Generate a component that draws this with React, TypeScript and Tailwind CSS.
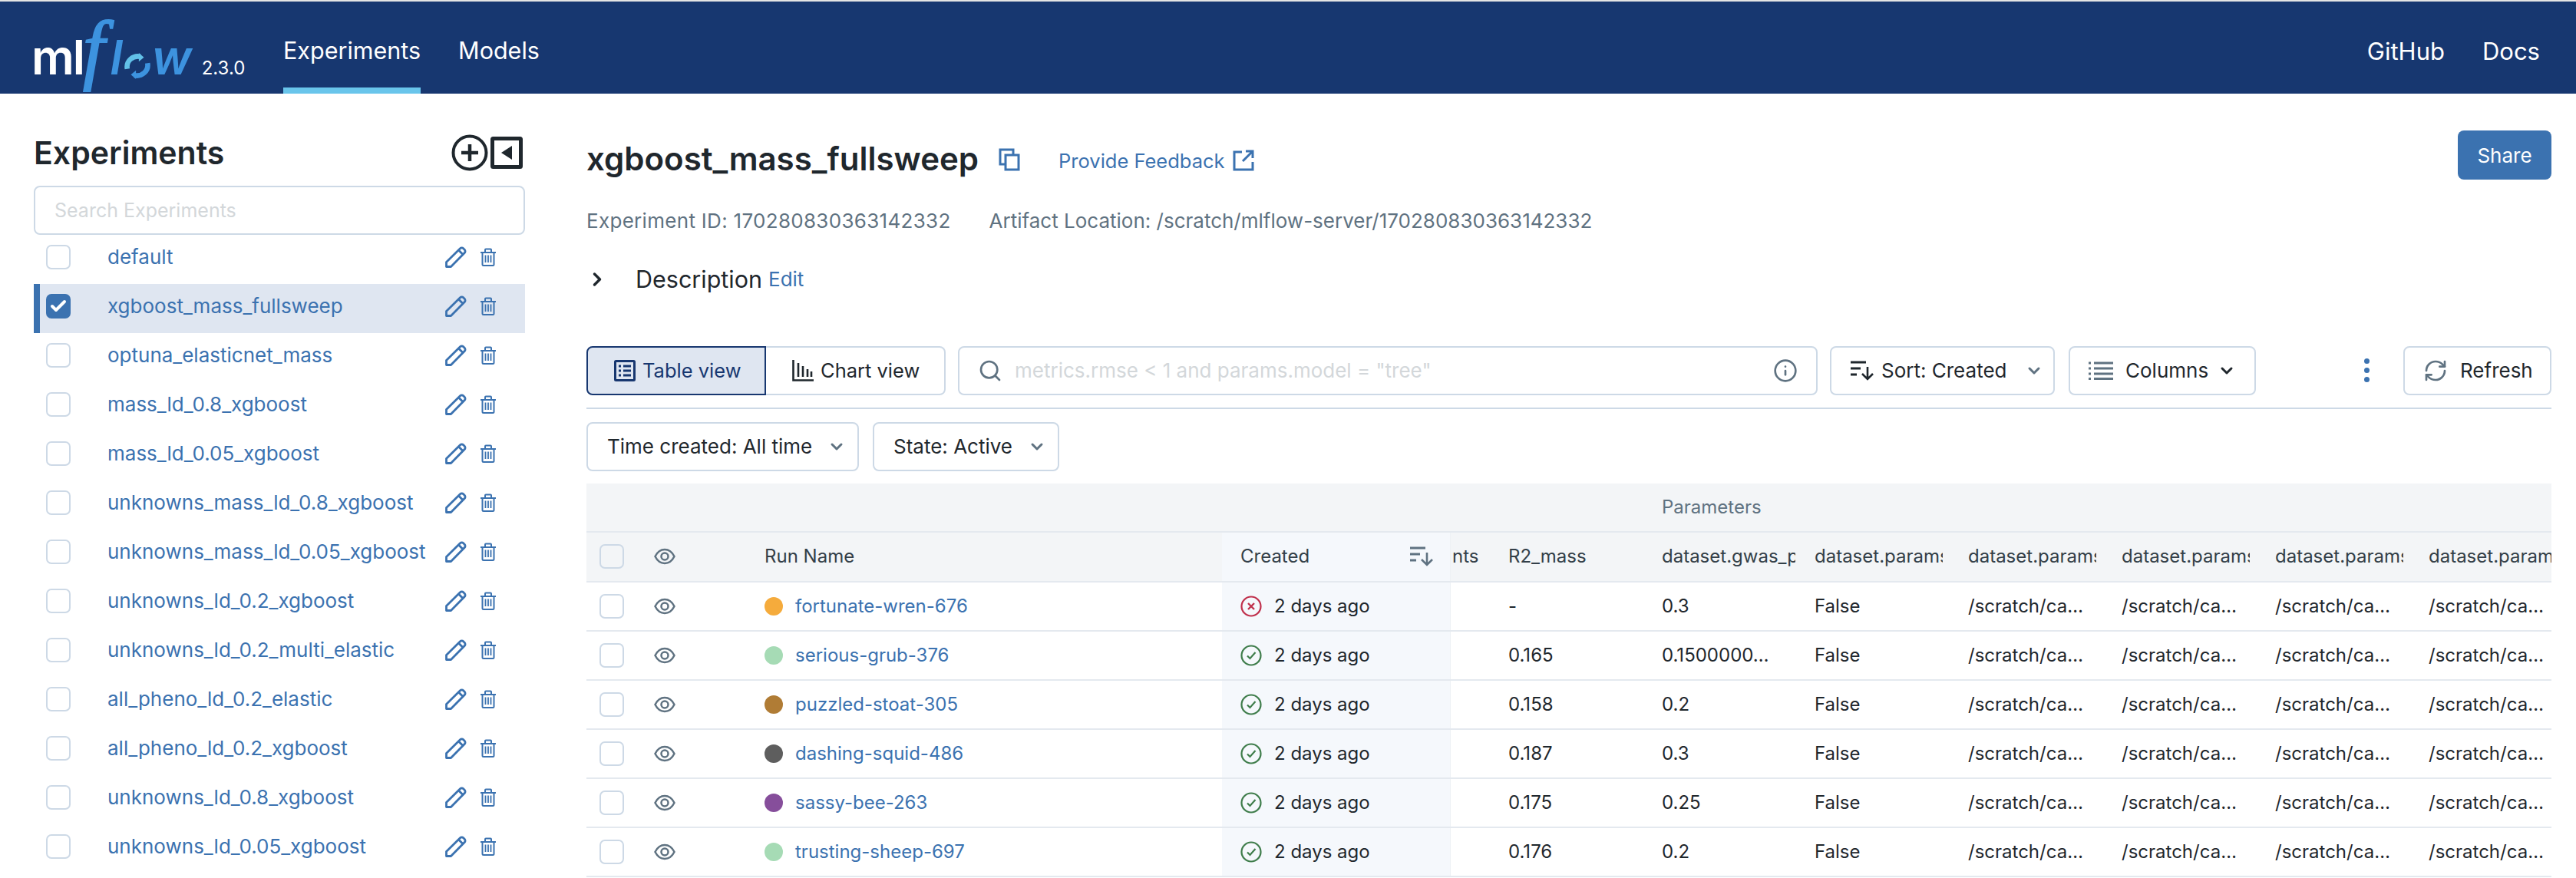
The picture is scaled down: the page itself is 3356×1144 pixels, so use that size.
import { ChevronDown, ChevronRight, Info, RefreshCw, Search, Check } from "lucide-react";

const FONT = "font-['Inter','Noto_Sans',sans-serif]";

const experiments = [
  "default",
  "xgboost_mass_fullsweep",
  "optuna_elasticnet_mass",
  "mass_ld_0.8_xgboost",
  "mass_ld_0.05_xgboost",
  "unknowns_mass_ld_0.8_xgboost",
  "unknowns_mass_ld_0.05_xgboost",
  "unknowns_ld_0.2_xgboost",
  "unknowns_ld_0.2_multi_elastic",
  "all_pheno_ld_0.2_elastic",
  "all_pheno_ld_0.2_xgboost",
  "unknowns_ld_0.8_xgboost",
  "unknowns_ld_0.05_xgboost",
];

const runs = [
  { name: "fortunate-wren-676", dot: "bg-[#f5ab3c]", failed: true, r2: "-", gwas: "0.3" },
  { name: "serious-grub-376", dot: "bg-[#a6dbb5]", failed: false, r2: "0.165", gwas: "0.1500000…" },
  { name: "puzzled-stoat-305", dot: "bg-[#b07c35]", failed: false, r2: "0.158", gwas: "0.2" },
  { name: "dashing-squid-486", dot: "bg-[#5e5e5e]", failed: false, r2: "0.187", gwas: "0.3" },
  { name: "sassy-bee-263", dot: "bg-[#864e9b]", failed: false, r2: "0.175", gwas: "0.25" },
  { name: "trusting-sheep-697", dot: "bg-[#a6dbb5]", failed: false, r2: "0.176", gwas: "0.2" },
];

const GRID =
  "grid grid-cols-[88px_144px_596px_298px_75px_200px_199px_200px_200px_200px_200px_160px]";

function PencilIcon() {
  return (
    <svg width="28" height="28" viewBox="0 0 28 28" fill="none" stroke="#3b72b0" strokeWidth="2.800" strokeLinejoin="round">
      <path d="M1.500 26.500v-6L19.500 2.800a3 3 0 0 1 4.200 0l1.500 1.500a3 3 0 0 1 0 4.200L7.500 26.500z" />
      <path d="M17.500 5l5.500 5.500" />
    </svg>
  );
}

function TrashIcon() {
  return (
    <svg width="20" height="24" viewBox="0 0 20 24" fill="none" stroke="#3b72b0" strokeWidth="2">
      <path d="M0 6h20M6 6V2.500Q6 1.500 7 1.500h6q1 0 1 1V6M2.500 6v15.500q0 1.500 1.500 1.500h12q1.500 0 1.500-1.500V6" />
      <path d="M6.500 9.500v9.500M10 9.500v9.500M13.500 9.500v9.500" strokeWidth="1.800" />
    </svg>
  );
}

function EyeIcon() {
  return (
    <svg width="28" height="22" viewBox="0 0 28 22" fill="none" stroke="#5f7281" strokeWidth="2.500">
      <path d="M1.500 11C4.500 5 8.800 2 14 2s9.500 3 12.500 9c-3 6-7.300 9-12.500 9S4.500 17 1.500 11z" />
      <circle cx="14" cy="11" r="4.500" />
    </svg>
  );
}

function SortIcon({ color }: { color: string }) {
  return (
    <svg width="30" height="26" viewBox="0 0 30 26" fill="none" stroke={color} strokeWidth="3">
      <path d="M0 2h20M0 10h13M0 18h8" />
      <path d="M22 8v16M15 17l7 7 7-7" strokeWidth="2.600" />
    </svg>
  );
}

function StatusIcon({ failed }: { failed: boolean }) {
  const color = failed ? "#c0304c" : "#3f7d4b";
  return (
    <svg width="28" height="28" viewBox="0 0 28 28" fill="none" stroke={color} strokeWidth="2.200">
      <circle cx="14" cy="14" r="12.500" />
      {failed ? <path d="M10 10l8 8M18 10l-8 8" strokeWidth="2.400" /> : <path d="M9 14.500l3.500 3.500L19.500 10" />}
    </svg>
  );
}

function Logo() {
  return (
    <div className="ml-[-3px] flex w-[279px] items-baseline pt-[2px] text-[62px] leading-[80px]">
      <span className="font-semibold tracking-[-2px] text-white">ml</span>
      <span className="ml-[-1px] flex items-baseline font-semibold text-[#3d93df] italic">
        <span className="font-['Liberation_Serif'] text-[102px] leading-none font-normal [-webkit-text-stroke:2px_#3d93df]">f</span>
        <span className="ml-[7px]">l</span>
        <svg width="34" height="34" viewBox="0 0 36 36" fill="none" strokeWidth="7" className="mb-[12px] ml-[2px] self-end">
          <path d="M4 22C2 11 12 3 22 5" stroke="#62c1e8" />
          <path d="M32 14c2 11-8 19-18 17" stroke="#3d93df" />
          <path d="M20 0l7 6-7 6z" fill="#62c1e8" />
          <path d="M16 36l-7-6 7-6z" fill="#3d93df" />
        </svg>
        <span className="ml-[2px]">w</span>
      </span>
      <span className="ml-[13px] text-[24px] leading-none font-normal text-white">2.3.0</span>
    </div>
  );
}

function Header() {
  return (
    <header className="flex h-[120px] items-stretch justify-between bg-[#173770] pr-[47px] pl-[44px] text-white">
      <div className="flex items-stretch">
        <div className="mr-[49px] flex items-center">
          <Logo />
        </div>
        <a className="flex items-center border-b-[8px] border-[#69c5eb] pt-[16px] text-[30.500px]">Experiments</a>
        <a className="ml-[49px] flex items-center pt-[8px] text-[30.500px]">Models</a>
      </div>
      <div className="flex items-center gap-[49px] pt-[10px] text-[31px]">
        <a>GitHub</a>
        <a>Docs</a>
      </div>
    </header>
  );
}

function Sidebar() {
  return (
    <aside className="w-[720px] shrink-0 pr-[36px] pl-[44px]">
      <div className="mt-[52px] flex h-[50px] items-center justify-between pr-[3px]">
        <h1 className="pt-[2px] text-[41px] font-semibold text-[#1f272d]">Experiments</h1>
        <div className="flex items-center gap-[3px]">
          <svg width="48" height="48" viewBox="0 0 48 48" fill="none" stroke="#1f272d" strokeWidth="4">
            <circle cx="24" cy="24" r="21.500" />
            <path d="M24 13v22M13 24h22" strokeWidth="4.500" />
          </svg>
          <svg width="42" height="42" viewBox="0 0 42 42" fill="none">
            <rect x="2.500" y="2.500" width="37" height="37" rx="1" stroke="#1f272d" strokeWidth="5" />
            <path d="M28 12v18L14 21z" fill="#1f272d" />
          </svg>
        </div>
      </div>
      <div className="mt-[18px] flex h-[64px] items-center rounded-[8px] border-2 border-[#cdd9e6] pt-[2px] pl-[25px] text-[25px] text-[#d3d7da]">
        Search Experiments
      </div>
      <ul>
        {experiments.map((name, i) => (
          <li
            key={name}
            className={
              i === 1
                ? "flex h-[64px] items-center border-l-[8px] border-[#3b72b0] bg-[#dfe6f1] pb-[7px] pl-[8px]"
                : "flex h-[64px] items-center pb-[7px] pl-[16px]"
            }
          >
            {i === 1 ? (
              <span className="flex h-[32px] w-[32px] items-center justify-center rounded-[7px] bg-[#3b72b0]">
                <Check size={24} color="white" strokeWidth={4} />
              </span>
            ) : (
              <span className="h-[32px] w-[32px] rounded-[7px] border-2 border-[#cdd9e6]" />
            )}
            <span className="ml-[48px] w-[440px] text-[26px] whitespace-nowrap text-[#3b72b0]">{name}</span>
            <PencilIcon />
            <span className="ml-[18px]">
              <TrashIcon />
            </span>
          </li>
        ))}
      </ul>
    </aside>
  );
}

function OutlineButton({ className, children }: { className: string; children: React.ReactNode }) {
  return (
    <div className={`flex h-[64px] items-center rounded-[8px] border-2 border-[#cdd9e6] text-[26px] text-[#1f272d] ${className}`}>
      {children}
    </div>
  );
}

function Toolbar() {
  return (
    <>
      <div className="mt-[64px] flex items-center">
        <div className="flex h-[64px] w-[234px] items-center rounded-l-[8px] border-2 border-[#173770] bg-[#dfe6f1] pl-[34px] text-[25.500px] text-[#173770]">
          <svg width="28" height="28" viewBox="0 0 28 28" fill="none" stroke="#173770" strokeWidth="3" className="mr-[9px]">
            <rect x="1.500" y="1.500" width="25" height="25" rx="1" />
            <path d="M6 8h3M12 8h10M6 14h3M12 14h10M6 20h3M12 20h10" />
          </svg>
          Table view
        </div>
        <div className="flex h-[64px] w-[234px] items-center rounded-r-[8px] border-2 border-l-0 border-[#cdd9e6] pl-[34px] text-[25.500px] text-[#1f272d]">
          <svg width="28" height="28" viewBox="0 0 28 28" fill="none" stroke="#1f272d" strokeWidth="2.600" className="mr-[9px]">
            <path d="M1.500 0v26.500H28" />
            <path d="M8 22V4M14 22V8M20 22V12M25 22V15" />
          </svg>
          Chart view
        </div>
        <div className="ml-[16px] flex h-[64px] w-[1120px] items-center rounded-[8px] border-2 border-[#cdd9e6] pr-[24px] pl-[24px] text-[26px] text-[#d3d7da]">
          <Search size={32} color="#5f7281" strokeWidth={2} className="mr-[16px]" />
          <span className="flex-1">metrics.rmse &lt; 1 and params.model = "tree"</span>
          <Info size={32} color="#5f7281" strokeWidth={2} />
        </div>
        <OutlineButton className="ml-[16px] w-[293px] pl-[25px]">
          <SortIcon color="#1f272d" />
          <span className="ml-[10px]">Sort: Created</span>
          <ChevronDown size={24} color="#5f7281" strokeWidth={3} className="ml-[24px]" />
        </OutlineButton>
        <OutlineButton className="ml-[18px] w-[244px] pl-[24px]">
          <svg width="32" height="24" viewBox="0 0 32 24" fill="none" stroke="#5f7281" strokeWidth="3">
            <path d="M0 2h3M7 2h25M0 9h3M7 9h25M0 16h3M7 16h25M0 22.500h3M7 22.500h25" />
          </svg>
          <span className="ml-[16px]">Columns</span>
          <ChevronDown size={24} color="#1f272d" strokeWidth={3} className="ml-[12px]" />
        </OutlineButton>
        <div className="ml-[136px] flex w-[16px] flex-col items-center gap-[5px]">
          <span className="h-[7px] w-[7px] rounded-full bg-[#3b72b0]" />
          <span className="h-[7px] w-[7px] rounded-full bg-[#3b72b0]" />
          <span className="h-[7px] w-[7px] rounded-full bg-[#3b72b0]" />
        </div>
        <OutlineButton className="ml-[40px] w-[193px] pl-[24px]">
          <RefreshCw size={32} color="#5f7281" strokeWidth={2} />
          <span className="ml-[16px]">Refresh</span>
        </OutlineButton>
      </div>
      <div className="mt-[16px] h-[2px] bg-[#cdd9e6]" />
      <div className="mt-[17px] flex">
        <OutlineButton className="w-[355px] pl-[25px]">
          Time created: All time
          <ChevronDown size={24} color="#5f7281" strokeWidth={3} className="ml-[20px]" />
        </OutlineButton>
        <OutlineButton className="ml-[18px] w-[243px] pl-[25px]">
          State: Active
          <ChevronDown size={24} color="#5f7281" strokeWidth={3} className="ml-[20px]" />
        </OutlineButton>
      </div>
    </>
  );
}

function Table() {
  return (
    <div className="mt-[16px] text-[24px]">
      <div className="flex h-[64px] items-center border-b-2 border-[#e4e9ef] bg-[#f3f5f7] pl-[1401px] text-[#5f7281]">
        Parameters
      </div>
      <div className={`${GRID} h-[65px] items-center border-b-2 border-[#e4e9ef] bg-[#f3f5f7] text-[#333f48]`}>
        <span className="ml-[17px] h-[32px] w-[32px] rounded-[7px] border-2 border-[#cdd9e6]" />
        <EyeIcon />
        <span>Run Name</span>
        <div className="flex h-full items-center justify-between border-r border-[#eef1f5] bg-[#f5f8fc] pr-[22px] pl-[24px]">
          Created
          <SortIcon color="#5f7281" />
        </div>
        <span className="pl-[2px]">nts</span>
        <span>R2_mass</span>
        <span className="w-[174px] overflow-hidden whitespace-nowrap">dataset.gwas_p</span>
        <span className="w-[167px] overflow-hidden whitespace-nowrap">dataset.params</span>
        <span className="w-[167px] overflow-hidden whitespace-nowrap">dataset.params</span>
        <span className="w-[167px] overflow-hidden whitespace-nowrap">dataset.params</span>
        <span className="w-[167px] overflow-hidden whitespace-nowrap">dataset.params</span>
        <span className="overflow-hidden whitespace-nowrap">dataset.params</span>
      </div>
      {runs.map((r) => (
        <div key={r.name} className={`${GRID} h-[64px] items-center border-b-2 border-[#e4e9ef] text-[#1f272d]`}>
          <span className="ml-[17px] h-[32px] w-[32px] rounded-[7px] border-2 border-[#cdd9e6]" />
          <EyeIcon />
          <div className="flex items-center">
            <span className={`h-[24px] w-[24px] rounded-full ${r.dot}`} />
            <span className="ml-[16px] text-[#3b72b0]">{r.name}</span>
          </div>
          <div className="flex h-full items-center border-r border-[#eef1f5] bg-[#f5f8fc] pl-[24px]">
            <StatusIcon failed={r.failed} />
            <span className="ml-[16px]">2 days ago</span>
          </div>
          <span />
          <span>{r.r2}</span>
          <span>{r.gwas}</span>
          <span>False</span>
          <span>/scratch/ca…</span>
          <span>/scratch/ca…</span>
          <span>/scratch/ca…</span>
          <span>/scratch/ca…</span>
        </div>
      ))}
    </div>
  );
}

export default function App() {
  return (
    <div className={`h-[1144px] w-[3356px] overflow-hidden bg-white ${FONT}`}>
      <div className="h-[2px] bg-[#e4e4e4]" />
      <Header />
      <div className="flex">
        <Sidebar />
        <main className="ml-[44px] w-[2560px]">
          <div className="mt-[48px] flex h-[64px] items-center justify-between">
            <div className="mt-[8px] flex items-center">
              <h2 className="text-[42px] font-semibold text-[#1f272d]">xgboost_mass_fullsweep</h2>
              <svg width="28" height="30" viewBox="0 0 28 30" fill="none" stroke="#3b72b0" strokeWidth="3" className="mt-[4px] ml-[26px]">
                <path d="M19 9V2H2v19h7" />
                <rect x="9" y="9" width="17" height="19" />
              </svg>
              <a className="mt-[8px] ml-[50px] text-[25.500px] text-[#3b72b0]">Provide Feedback</a>
              <svg width="28" height="28" viewBox="0 0 28 28" fill="none" stroke="#3b72b0" strokeWidth="3" className="mt-[6px] ml-[10px]">
                <path d="M12 3H2v23h24V16M17 2h9v9M26 2L13 15" />
              </svg>
            </div>
            <button className="h-[64px] w-[122px] rounded-[8px] bg-[#3b72b0] text-[26px] text-white">Share</button>
          </div>
          <div className="mt-[34px] flex text-[26px] text-[#5f7281]">
            <span className="tracking-[0.3px]">Experiment ID: 170280830363142332</span>
            <span className="ml-[50px]">Artifact Location: /scratch/mlflow-server/170280830363142332</span>
          </div>
          <div className="mt-[34px] flex items-center">
            <ChevronRight size={28} color="#1f272d" strokeWidth={3} />
            <span className="ml-[36px] text-[30.500px] text-[#1f272d]">Description</span>
            <a className="ml-[8px] text-[26px] text-[#3b72b0]">Edit</a>
          </div>
          <Toolbar />
          <Table />
        </main>
      </div>
    </div>
  );
}
